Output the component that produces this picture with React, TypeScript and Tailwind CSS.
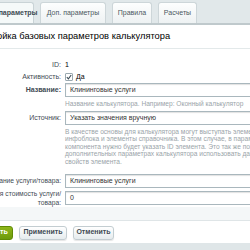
import React from 'react'

const font = "font-['Liberation_Sans',Arial,sans-serif]"

function Tab({ label, active, className = '' }: { label: string; active?: boolean; className?: string }) {
  return (
    <div
      className={`h-[21px] flex items-center justify-center rounded-t-[3px] border border-b-0 text-[7px] whitespace-nowrap ${
        active
          ? 'bg-[#f5f9f9] border-[#c9d3d6] font-bold text-[#3f4b54]'
          : 'bg-gradient-to-b from-[#fdfefe] to-[#eef2f3] border-[#cdd6d9] text-[#4c5861]'
      } ${className}`}
    >
      {label}
    </div>
  )
}

function Input({ value }: { value: string }) {
  return (
    <div className="h-[14px] w-[260px] border border-[#a9b7bd] bg-white shadow-[inset_0_1px_1px_rgba(0,0,0,0.12)] flex items-center px-[4px] text-[7px] text-[#333] whitespace-nowrap">
      {value}
    </div>
  )
}

function Label({ children, bold, small }: { children: React.ReactNode; bold?: boolean; small?: boolean }) {
  return (
    <div
      className={`text-right text-[#3f4b54] whitespace-nowrap ${small ? 'text-[6.7px]' : 'text-[7px]'} ${
        bold ? 'font-bold' : ''
      }`}
    >
      {children}
    </div>
  )
}

export default function App() {
  return (
    <div className={`w-[250px] h-[250px] overflow-hidden bg-[#e1e8ea] flex flex-col ${font}`}>
      {/* tabs */}
      <div className="h-[25px] flex items-end gap-[6px] border-b-2 border-[#bfc9cc] shrink-0">
        <Tab label="Основные параметры" active className="w-[70px] ml-[-36px]" />
        <Tab label="Доп. параметры" className="w-[66px]" />
        <Tab label="Правила" className="w-[40px]" />
        <Tab label="Расчеты" className="w-[39px]" />
      </div>

      <div className="bg-white flex-1 flex flex-col">
        <div className="h-[24px] pt-[1px] flex items-center border-b border-[#e3e9ea] ml-[-29px] text-[9.3px] text-[#000] whitespace-nowrap">
          Настройка базовых параметров калькулятора
        </div>

        <div className="grid grid-cols-[61px_1fr] gap-x-[4px] items-center pt-[10px] text-[7px] text-[#3f4b54]">
          <Label>ID:</Label>
          <div className="h-[12px] flex items-center text-[#000]">1</div>

          <Label>Активность:</Label>
          <div className="h-[12px] flex items-center gap-[3px] text-[#000]">
            <span className="w-[8px] h-[8px] border border-[#9aa9b0] rounded-[1px] bg-white flex items-center justify-center">
              <svg width="6" height="6" viewBox="0 0 6 6">
                <path d="M0.8 3.2 L2.4 4.8 L5.2 1" fill="none" stroke="#3a4a54" strokeWidth="1.1" />
              </svg>
            </span>
            Да
          </div>

          <Label bold>Название:</Label>
          <Input value="Клининговые услуги" />

          <div />
          <div className="h-[14px] flex items-center text-[6.6px] text-[#9aa4a9] whitespace-nowrap">
            Название калькулятора. Например: Оконный калькулятор
          </div>

          <Label>Источник:</Label>
          <Input value="Указать значения вручную" />

          <div />
          <div className="pt-[3px] pb-[9px] text-[6.6px] text-[#9aa4a9] leading-[7.4px] whitespace-nowrap">
            В качестве основы для калькулятора могут выступать элементы
            <br />
            инфоблока и элементы справочника. В этом случае, в параметрах
            <br />
            компонента нужно будет указать ID элемента. Это так же позволит
            <br />
            дополнительных параметрах калькулятора использовать данные
            <br />
            свойств элемента.
          </div>

          <div className="ml-[-40px]">
            <Label small>Название услуги/товара:</Label>
          </div>
          <Input value="Клининговые услуги" />

          <div className="ml-[-40px] leading-[9px] mt-[1px]">
            <Label small>
              Минимальная стоимость услуги/
              <br />
              товара:
            </Label>
          </div>
          <div className="mt-[1px]">
            <Input value="0" />
          </div>
        </div>

        <div className="h-[14px] bg-[#f4f7f8] border-b border-[#dfe5e7]" />

        <div className="flex-1 flex items-center gap-[6px] pt-[1px]">
          <div className="ml-[-35px] w-[48px] h-[14px] rounded-[3px] bg-gradient-to-b from-[#8fb619] to-[#6c9a0b] border border-[#5f8a05] text-white font-bold text-[7px] flex items-center justify-center">
            Сохранить
          </div>
          <div className="w-[48px] h-[14px] rounded-[3px] bg-gradient-to-b from-white to-[#e6ecee] border border-[#c3cdd1] text-[#3f4b54] font-bold text-[7px] flex items-center justify-center shadow-[0_1px_1px_rgba(0,0,0,0.1)]">
            Применить
          </div>
          <div className="w-[41px] h-[14px] rounded-[3px] bg-gradient-to-b from-white to-[#e6ecee] border border-[#c3cdd1] text-[#3f4b54] font-bold text-[7px] flex items-center justify-center shadow-[0_1px_1px_rgba(0,0,0,0.1)]">
            Отменить
          </div>
        </div>
      </div>

      <div className="h-[7px] bg-[#dfe6e8] shrink-0" />
    </div>
  )
}
